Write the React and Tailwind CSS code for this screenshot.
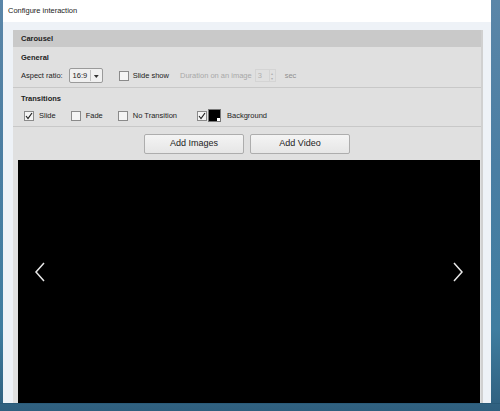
import React from 'react';

function Check({ checked }) {
  return (
    <span className="w-[10px] h-[10px] border border-[#8a8a8a] bg-[#f4f4f4] flex items-center justify-center">
      {checked && (
        <svg width="8" height="8" viewBox="0 0 8 8">
          <path d="M1 4 L3 6.5 L7 1" fill="none" stroke="#222" strokeWidth="1.2" />
        </svg>
      )}
    </span>
  );
}

export default function App() {
  return (
    <div
      className="w-[500px] h-[411px] overflow-hidden flex flex-col text-[#222]"
      style={{
        fontFamily: '"Liberation Sans", Arial, sans-serif',
        background:
          'linear-gradient(180deg, #5b86a8 0%, #4a7ea3 40%, #3f7da0 80%, #2f5f7e 100%)',
      }}
    >
      <div className="ml-[3px] w-[488px] h-[403px] shrink-0 flex flex-col">
        <div className="h-[22px] bg-white flex items-center pl-[5px] text-[7.5px]">
          Configure interaction
        </div>
        <div className="flex-1 bg-[#eef2f7] pt-[8px] pl-[10px] pr-[8px] flex min-h-0">
          <div className="flex-1 flex flex-col bg-[#e0e0e0] border-r-2 border-[#d0d0d0] min-h-0">
            <div className="h-[17px] bg-[#c9c9c9] flex items-center pl-[8px] text-[7.5px] font-bold">
              Carousel
            </div>

            <div className="h-[41px] flex flex-col border-b border-[#c8c8c8] pl-[8px]">
              <div className="h-[21px] pt-[1px] flex items-center text-[7.5px] font-bold">General</div>
              <div className="flex items-center text-[7.5px]">
                <span>Aspect ratio:</span>
                <span className="ml-[6px] w-[34px] h-[15px] border border-[#9a9a9a] rounded-[2px] bg-[#f0f0f0] flex items-center">
                  <span className="w-[22px] text-center border-r border-[#c0c0c0]">16:9</span>
                  <svg width="11" height="8" viewBox="0 0 11 8">
                    <path d="M3 3 L8 3 L5.5 6 Z" fill="#333" />
                  </svg>
                </span>
                <span className="ml-[16px]"><Check /></span>
                <span className="ml-[4px]">Slide show</span>
                <span className="ml-[11px] text-[#a8a8a8]">Duration on an image</span>
                <span className="ml-[3px] w-[21px] h-[13px] border border-[#d4d4d4] flex items-center text-[#b0b0b0]">
                  <span className="pl-[2px] flex-1">3</span>
                  <span className="w-[6px] h-full flex flex-col items-center justify-center border-l border-[#d4d4d4] text-[4px] leading-[5px]">
                    <span>▴</span>
                    <span>▾</span>
                  </span>
                </span>
                <span className="ml-[9px] text-[#909090]">sec</span>
              </div>
            </div>

            <div className="h-[39px] flex flex-col border-b border-[#c8c8c8] pl-[8px]">
              <div className="h-[21px] pt-[1px] flex items-center text-[7.5px] font-bold">Transitions</div>
              <div className="flex items-center text-[7.5px] pl-[3px]">
                <Check checked />
                <span className="ml-[5px]">Slide</span>
                <span className="ml-[15px]"><Check /></span>
                <span className="ml-[5px]">Fade</span>
                <span className="ml-[15px]"><Check /></span>
                <span className="ml-[5px]">No Transition</span>
                <span className="ml-[20px]"><Check checked /></span>
                <span className="ml-[1px] w-[13px] h-[13px] bg-black border border-[#777] relative">
                  <span className="absolute right-0 bottom-0 w-[3px] h-[3px] bg-white" />
                </span>
                <span className="ml-[6px]">Background</span>
              </div>
            </div>

            <div className="h-[33px] flex items-center justify-center gap-[6px]">
              <button className="w-[100px] h-[20px] border border-[#adadad] rounded-[2px] bg-gradient-to-b from-[#f4f4f4] to-[#e6e6e6] text-[9px]">
                Add Images
              </button>
              <button className="w-[100px] h-[20px] border border-[#adadad] rounded-[2px] bg-gradient-to-b from-[#f4f4f4] to-[#e6e6e6] text-[9px]">
                Add Video
              </button>
            </div>

            <div className="flex-1 pl-[5px] pr-[1px] min-h-0 flex">
              <div className="flex-1 bg-black flex items-center justify-between pl-[16px] pr-[16px] pb-[20px]">
                <svg width="12" height="20" viewBox="0 0 12 20">
                  <path d="M10 1 L2 10 L10 19" fill="none" stroke="#e8e8e8" strokeWidth="1.5" />
                </svg>
                <svg width="12" height="20" viewBox="0 0 12 20">
                  <path d="M2 1 L10 10 L2 19" fill="none" stroke="#e8e8e8" strokeWidth="1.5" />
                </svg>
              </div>
            </div>
          </div>
        </div>
      </div>
      <div className="h-[1px] bg-[#2a5a78]" />
    </div>
  );
}
